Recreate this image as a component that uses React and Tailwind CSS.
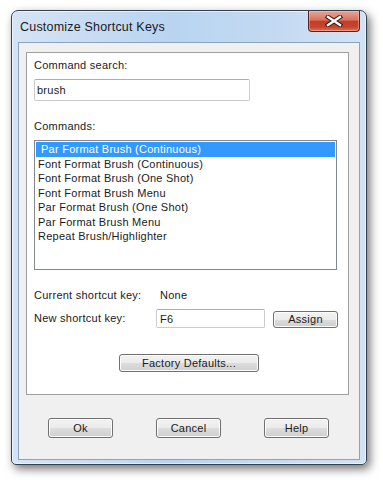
import React from "react";

const Btn = ({ children, className = "" }) => (
  <button
    className={`rounded-[3px] border border-[#707070] bg-[linear-gradient(#f2f2f2_0%,#ebebeb_50%,#dddddd_50%,#cfcfcf_100%)] shadow-[inset_0_0_0_1px_#fcfcfc] text-[11px] leading-[13px] tracking-[0.25px] text-[#1a1a1a] flex items-center justify-center ${className}`}
  >
    {children}
  </button>
);

const commands = [
  "Par Format Brush (Continuous)",
  "Font Format Brush (Continuous)",
  "Font Format Brush (One Shot)",
  "Font Format Brush Menu",
  "Par Format Brush (One Shot)",
  "Par Format Brush Menu",
  "Repeat Brush/Highlighter",
];

export default function App() {
  return (
    <div className="min-h-screen bg-white pt-[10px] pl-[11px] font-['Liberation_Sans',Arial,sans-serif]">
      {/* window */}
      <div className="w-[356px] h-[455px] rounded-t-[7px] rounded-b-[5px] border border-[#34414f] bg-[linear-gradient(to_right,#d5e4f5,#b8d4f1_45%,#c4daf2_75%,#d3e3f5)] shadow-[3px_4px_10px_rgba(0,0,0,0.55),inset_0_0_0_1px_rgba(255,255,255,0.55)] flex flex-col">
        {/* title bar */}
        <div className="h-[31px] flex justify-between pl-[8px] pr-[6px]">
          <span className="mt-[9px] text-[12.5px] leading-[14px] tracking-[0.2px] text-[#1a1a1a]">
            Customize Shortcut Keys
          </span>
          <div className="w-[52px] h-[21px] rounded-b-[4px] border border-[#5b2218] border-t-0 bg-[linear-gradient(#e9a597_0%,#d7735f_45%,#c23d27_52%,#c5442d_80%,#de7656_100%)] shadow-[inset_0_0_0_1px_rgba(255,200,190,0.45)] flex items-center justify-center">
            <svg width="18" height="12" viewBox="0 0 18 12">
              <path d="M3 2 L15 10 M15 2 L3 10" stroke="#3b1712" strokeWidth="4.4" strokeLinecap="square" />
              <path d="M3 2 L15 10 M15 2 L3 10" stroke="#ffffff" strokeWidth="2.4" strokeLinecap="square" />
            </svg>
          </div>
        </div>

        {/* client area */}
        <div className="ml-[6px] w-[342px] h-[418px] border border-[#8da2bb] bg-[#f0f0f0] flex flex-col">
          {/* group panel */}
          <div className="ml-[7px] mt-[9px] w-[323px] h-[343px] border border-[#a0a0a0] bg-white pl-[7px] pt-[5px] text-[11px] leading-[14px] tracking-[0.25px] text-[#1a1a1a]">
            <div>Command search:</div>
            <div className="mt-[7px] w-[216px] h-[22px] rounded-[2px] border border-[#c9ccd2] border-t-[#abadb3] bg-white pl-[2px] flex items-center">
              brush
            </div>

            <div className="mt-[18px]">Commands:</div>
            <div className="mt-[7px] w-[303px] h-[130px] border border-[#828790] bg-white p-[1px]">
              {commands.map((c, i) => (
                <div
                  key={c}
                  className={`h-[14.5px] leading-[14.5px] whitespace-nowrap ${
                    i === 0 ? "bg-[#3399ff] text-white pl-[5px]" : "pl-[2px]"
                  }`}
                >
                  {c}
                </div>
              ))}
            </div>

            <div className="mt-[18px] flex">
              <span className="w-[126px]">Current shortcut key:</span>
              <span>None</span>
            </div>

            <div className="mt-[7px] flex items-start h-[19px]">
              <span className="w-[122px] mt-[2px]">New shortcut key:</span>
              <div className="w-[109px] h-[19px] rounded-[2px] border border-[#c9ccd2] border-t-[#abadb3] bg-white pl-[3px] flex items-center">
                F6
              </div>
              <Btn className="ml-[8px] mt-[2px] w-[65px] h-[17px]">Assign</Btn>
            </div>

            <Btn className="mt-[26px] ml-[85px] w-[140px] h-[18px]">Factory Defaults...</Btn>
          </div>

          {/* bottom buttons */}
          <div className="mt-[23px] ml-[29px] flex gap-[43px]">
            <Btn className="w-[65px] h-[20px]">Ok</Btn>
            <Btn className="w-[65px] h-[20px]">Cancel</Btn>
            <Btn className="w-[65px] h-[20px]">Help</Btn>
          </div>
        </div>
      </div>
    </div>
  );
}
